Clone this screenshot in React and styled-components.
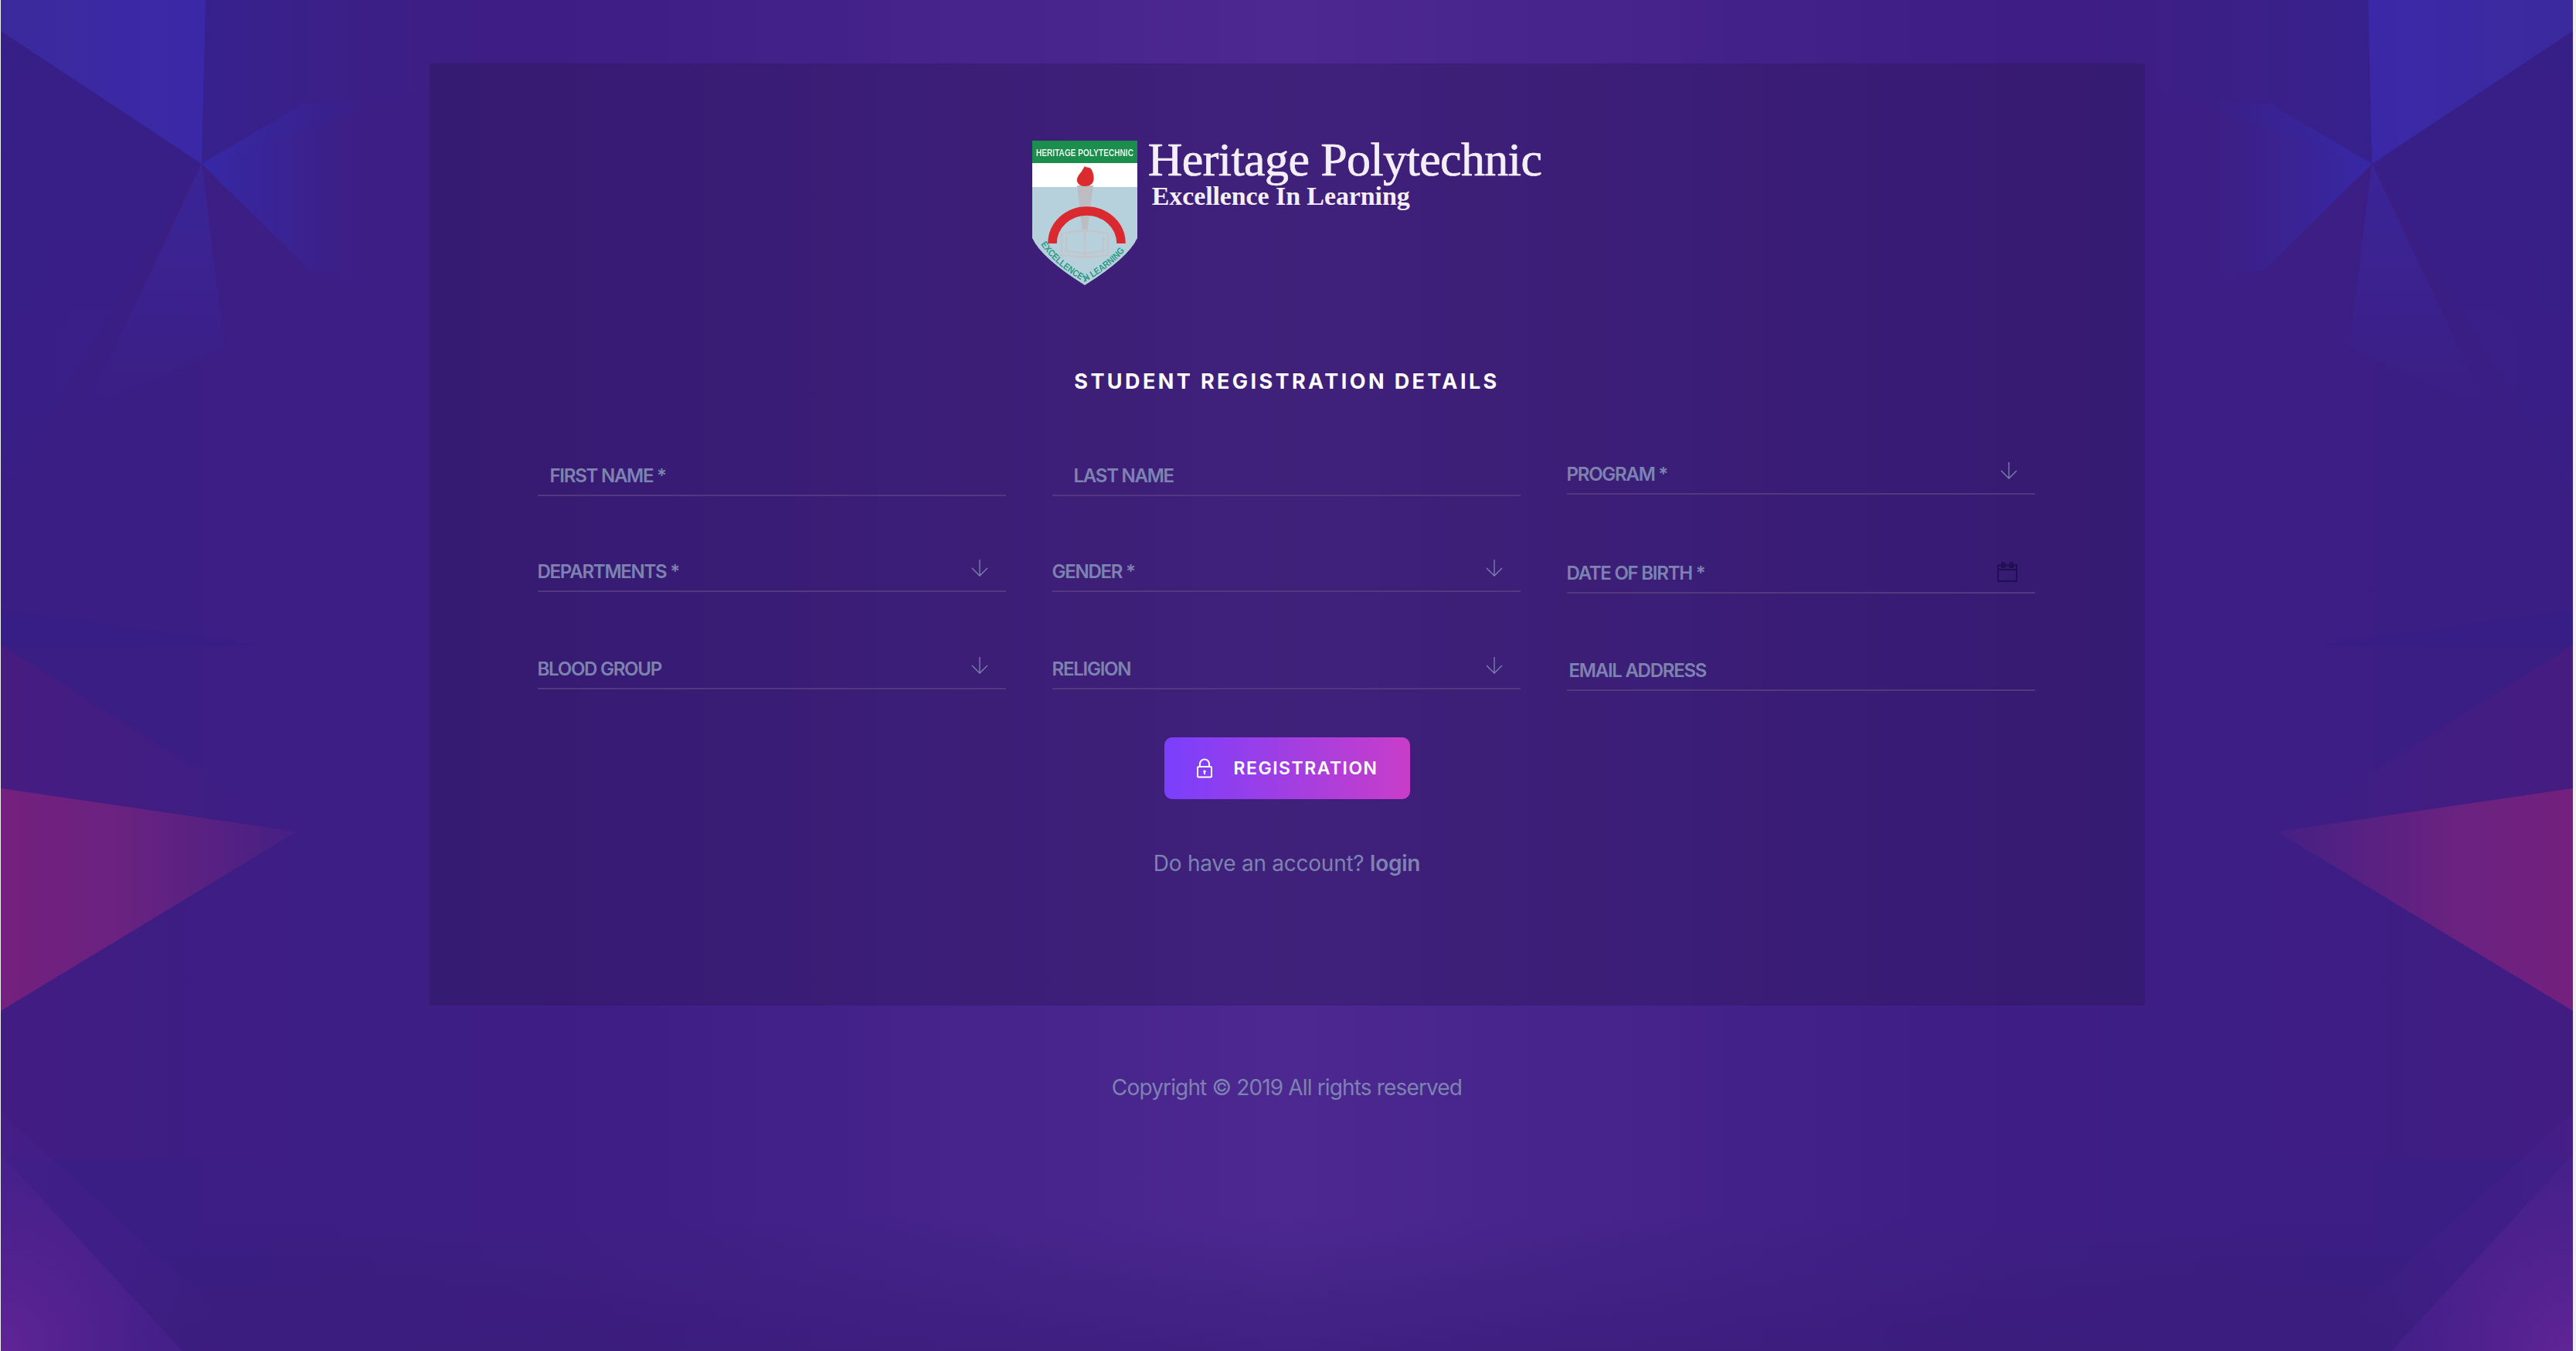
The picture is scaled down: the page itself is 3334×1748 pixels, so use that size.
import * as React from 'react'
import styled, { createGlobalStyle } from 'styled-components'

const GlobalStyle = createGlobalStyle`
  html, body {
    margin: 0;
    padding: 0;
    background: #f1f1f1;
  }
  * {
    box-sizing: border-box;
  }
`

const ArtShapes = () => (
  <g>
    <polygon points="0,40 260,212 0,640" fill="url(#artLeft)" />
    <polygon points="265,0 560,0 560,110 260,212" fill="url(#artUpper)" />
    <polygon points="0,0 265,0 260,212 0,40" fill="url(#artBlue)" />
    <polygon points="260,212 390,135 500,125 490,360 400,350" fill="url(#artGlow)" />
    <polygon points="260,212 290,450 110,530" fill="url(#artDrop)" />
    <polygon points="0,790 330,835 0,835" fill="#32208a" opacity="0.35" />
    <polygon points="0,835 383,1076 0,1020" fill="url(#artHaze)" />
    <polygon points="0,1020 383,1076 0,1308" fill="url(#artPink)" />
    <polygon points="0,1308 383,1076 420,1500 0,1500" fill="url(#artLow)" />
    <polygon points="0,1440 340,1748 0,1748" fill="url(#artCornerSoft)" />
    <polygon points="0,1494 235,1748 0,1748" fill="url(#artCorner)" />
  </g>
)

const Backdrop = () => (
  <BackdropArt viewBox="0 0 3329 1748" preserveAspectRatio="none">
    <defs>
      <linearGradient id="artLeft" x1="0" y1="0" x2="0" y2="1">
        <stop offset="0" stopColor="#34208c" stopOpacity="0.5" />
        <stop offset="1" stopColor="#34208c" stopOpacity="0.25" />
      </linearGradient>
      <linearGradient id="artUpper" x1="0" x2="1">
        <stop offset="0" stopColor="#35228f" stopOpacity="0.75" />
        <stop offset="1" stopColor="#35228f" stopOpacity="0" />
      </linearGradient>
      <linearGradient id="artBlue" x1="0" x2="1">
        <stop offset="0" stopColor="#3b2a9c" />
        <stop offset="1" stopColor="#3a28a8" />
      </linearGradient>
      <linearGradient id="artGlow" x1="0" x2="1">
        <stop offset="0" stopColor="#3728a6" />
        <stop offset="0.85" stopColor="#3728a0" stopOpacity="0" />
      </linearGradient>
      <linearGradient id="artDrop" x1="0" y1="0" x2="0" y2="1">
        <stop offset="0" stopColor="#3a28a0" stopOpacity="0.7" />
        <stop offset="1" stopColor="#3a28a0" stopOpacity="0" />
      </linearGradient>
      <linearGradient id="artHaze" x1="0" x2="1">
        <stop offset="0" stopColor="#4a1c80" stopOpacity="0.8" />
        <stop offset="1" stopColor="#4a1c80" stopOpacity="0" />
      </linearGradient>
      <linearGradient id="artPink" x1="0" x2="1">
        <stop offset="0" stopColor="#74207e" />
        <stop offset="0.4" stopColor="#6a2280" />
        <stop offset="1" stopColor="#452084" />
      </linearGradient>
      <linearGradient id="artLow" x1="0" x2="1">
        <stop offset="0" stopColor="#4a1b80" stopOpacity="0.45" />
        <stop offset="1" stopColor="#4a1b80" stopOpacity="0" />
      </linearGradient>
      <linearGradient id="artCornerSoft" x1="0" y1="0" x2="1" y2="0">
        <stop offset="0" stopColor="#48208c" stopOpacity="0.5" />
        <stop offset="1" stopColor="#48208c" stopOpacity="0" />
      </linearGradient>
      <radialGradient id="artCorner" cx="0" cy="1" r="1">
        <stop offset="0" stopColor="#602496" />
        <stop offset="1" stopColor="#4c2190" stopOpacity="0.45" />
      </radialGradient>
    </defs>
    <ArtShapes />
    <g transform="translate(3329,0) scale(-1,1)">
      <ArtShapes />
    </g>
  </BackdropArt>
)

const Shield = () => (
  <ShieldArt width="136" height="188" viewBox="0 0 136 188">
    <defs>
      <clipPath id="shieldClip">
        <path d="M0 0H136V126Q124 152 68 187Q12 152 0 126Z" />
      </clipPath>
    </defs>
    <g clipPath="url(#shieldClip)">
      <rect width="136" height="188" fill="#b6d0dc" />
      <rect y="29" width="136" height="31" fill="#ffffff" />
      <rect width="136" height="29" fill="#1b8e4e" />
    </g>
    <text x="68" y="20" textAnchor="middle" fontFamily="Liberation Sans, sans-serif" fontSize="12" fontWeight="700" fill="#e8f3ea" textLength="126" lengthAdjust="spacingAndGlyphs">HERITAGE POLYTECHNIC</text>
    <path d="M58 58L79 58L71 118H65Z" fill="#bcbcc2" />
    <path d="M68 33C70 36 75 33 77 38C80 44 81 52 77 56C73 60 63 60 60 56C55 51 60 44 63 41C65 38 66 36 68 33Z" fill="#dc2b2e" />
    <path d="M38 120L68 116L98 120V148L68 151L38 148ZM68 116V151M44 124V143L68 146L92 143V124" fill="none" stroke="#c3c5ca" strokeWidth="2.4" />
    <path d="M26 133A44.5 42 0 0 1 115 133" fill="none" stroke="#da2a30" strokeWidth="11.5" />
    <path id="shieldMotto" d="M11 134Q30 162 68 183Q106 162 123 138" fill="none" />
    <text fontFamily="Liberation Sans, sans-serif" fontSize="12" fontWeight="700" fill="#2b9a84">
      <textPath href="#shieldMotto" textLength="142" lengthAdjust="spacingAndGlyphs">EXCELLENCE IN LEARNING</textPath>
    </text>
  </ShieldArt>
)

const ArrowDown = () => (
  <FieldIcon width="22" height="22" viewBox="0 0 22 22" $lift={18}>
    <path d="M11 0V21M1 11L11 21L21 11" fill="none" stroke="#7c82b0" strokeWidth="1.3" />
  </FieldIcon>
)

const CalendarIcon = () => (
  <FieldIcon width="26" height="26" viewBox="0 0 26 26" $lift={13}>
    <path d="M1 4.5H25V25H1ZM1 10H25M6 1.5H9.5V7H6ZM16.5 1.5H20V7H16.5Z" fill="none" stroke="#1c0f52" strokeWidth="1.8" />
  </FieldIcon>
)

const LockIcon = () => (
  <svg width="20" height="26" viewBox="0 0 20 26">
    <path d="M2.5 11H17.5A1.5 1.5 0 0 1 19 12.5V23A1.5 1.5 0 0 1 17.5 24.5H2.5A1.5 1.5 0 0 1 1 23V12.5A1.5 1.5 0 0 1 2.5 11ZM4 11V7.5A6 6 0 0 1 16 7.5V11" fill="none" stroke="#ffffff" strokeWidth="2" />
    <path d="M10 15.5A1.7 1.7 0 0 1 11 18.6V21H9V18.6A1.7 1.7 0 0 1 10 15.5Z" fill="#ffffff" />
  </svg>
)

const columns = [
  [
    { label: 'FIRST NAME *', inset: 16 },
    { label: 'DEPARTMENTS *', select: true, gap: 64 },
    { label: 'BLOOD GROUP', select: true, gap: 66 },
  ],
  [
    { label: 'LAST NAME', inset: 28 },
    { label: 'GENDER *', select: true, gap: 64 },
    { label: 'RELIGION', select: true, gap: 66 },
  ],
  [
    { label: 'PROGRAM *', select: true, height: 58 },
    { label: 'DATE OF BIRTH *', date: true, gap: 68 },
    { label: 'EMAIL ADDRESS', inset: 3, gap: 66 },
  ],
]

const App = () => {
  return (
    <Page>
      <GlobalStyle />
      <Backdrop />
      <Card>
        <Logo>
          <Shield />
          <LogoText>
            <LogoName>Heritage Polytechnic</LogoName>
            <LogoMotto>Excellence In Learning</LogoMotto>
          </LogoText>
        </Logo>

        <Heading>STUDENT REGISTRATION DETAILS</Heading>

        {/* Form fields */}
        <FormGrid>
          {columns.map((fields, i) => (
            <FieldColumn key={i}>
              {fields.map((field) => (
                <Field key={field.label} $height={field.height} $gap={field.gap}>
                  <FieldLabel $inset={field.inset}>{field.label}</FieldLabel>
                  {field.select && <ArrowDown />}
                  {field.date && <CalendarIcon />}
                </Field>
              ))}
            </FieldColumn>
          ))}
        </FormGrid>

        <SubmitButton type="button">
          <LockIcon />
          REGISTRATION
        </SubmitButton>

        <AccountLine>
          Do have an account? <strong>login</strong>
        </AccountLine>
      </Card>

      <Footer>Copyright © 2019 All rights reserved</Footer>
    </Page>
  )
}

const Page = styled.div`
  position: relative;
  margin: 0 4px 0 1px;
  min-height: 1748px;
  overflow: hidden;
  display: flex;
  flex-direction: column;
  align-items: center;
  padding-top: 82px;
  font-family: Inter, 'Liberation Sans', sans-serif;
  background:
    linear-gradient(180deg, rgba(56, 28, 120, 0) 90%, rgba(56, 28, 120, 0.6) 100%),
    linear-gradient(90deg, #3a1e84 0%, #3e1e84 22%, #4c2890 50%, #3e1e84 78%, #3a1e84 100%);
`

const BackdropArt = styled.svg`
  position: absolute;
  inset: 0;
  width: 100%;
  height: 100%;
`

const Card = styled.main`
  position: relative;
  width: 2220px;
  height: 1219px;
  padding: 100px 140px 0;
  display: flex;
  flex-direction: column;
  align-items: center;
  background: rgba(44, 22, 90, 0.4);
`

const Logo = styled.div`
  display: flex;
  align-items: flex-start;
  gap: 14px;
  height: 188px;
`

const ShieldArt = styled.svg`
  flex: none;
  overflow: visible;
  filter: blur(0.4px);
`

const LogoText = styled.div`
  font-family: 'Liberation Serif', serif;
  color: #f4eef7;
`

const LogoName = styled.div`
  font-size: 62px;
  line-height: 48px;
  letter-spacing: -0.6px;
  white-space: nowrap;
  -webkit-text-stroke: 0.7px #f4eef7;
`

const LogoMotto = styled.div`
  margin: 4px 0 0 5px;
  font-size: 34px;
  line-height: 40px;
  font-weight: 700;
  letter-spacing: -0.1px;
  white-space: nowrap;
`

const Heading = styled.h1`
  margin: 104px 0 0;
  font-size: 27px;
  line-height: 40px;
  font-weight: 700;
  letter-spacing: 3.4px;
  color: #ffffff;
`

const FormGrid = styled.div`
  margin-top: 68px;
  width: 100%;
  display: grid;
  grid-template-columns: repeat(3, 606px);
  column-gap: 60px;
`

const FieldColumn = styled.div`
  display: flex;
  flex-direction: column;
`

const Field = styled.div`
  display: flex;
  align-items: flex-end;
  justify-content: space-between;
  height: ${(p) => p.$height || 60}px;
  margin-top: ${(p) => p.$gap || 0}px;
  padding-right: 23px;
  border-bottom: 2px solid #52397f;
`

const FieldLabel = styled.span`
  padding-left: ${(p) => p.$inset || 0}px;
  padding-bottom: 9px;
  font-size: 24px;
  line-height: 30px;
  font-weight: 600;
  letter-spacing: -1.25px;
  color: #7d83b1;
`

const FieldIcon = styled.svg`
  margin-bottom: ${(p) => p.$lift}px;
`

const SubmitButton = styled.button`
  margin-top: 60px;
  width: 318px;
  height: 80px;
  padding: 0 0 0 42px;
  display: flex;
  align-items: center;
  gap: 28px;
  border: none;
  border-radius: 10px;
  background: linear-gradient(90deg, #7a3ffc 0%, #c83dc9 100%);
  font-family: inherit;
  font-size: 23px;
  font-weight: 600;
  letter-spacing: 1.5px;
  color: #ffffff;
  cursor: pointer;
`

const AccountLine = styled.p`
  margin: 63px 0 0;
  font-size: 28px;
  line-height: 40px;
  letter-spacing: -0.25px;
  color: #7d83b1;
  strong {
    font-weight: 600;
  }
`

const Footer = styled.footer`
  position: relative;
  margin-top: 86px;
  font-size: 28px;
  line-height: 40px;
  letter-spacing: -0.85px;
  color: #7d83b1;
`

export default App
